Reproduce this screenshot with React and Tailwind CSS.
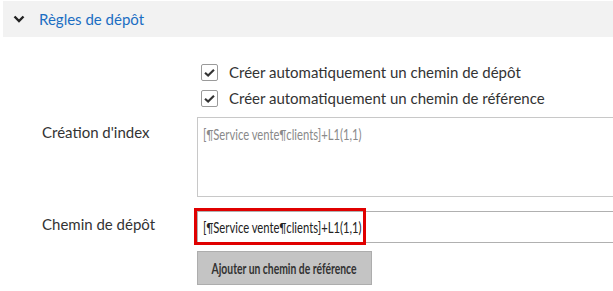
import { useState } from 'react';

function Check({ label }) {
  return (
    <label className="flex items-center gap-[11px] h-[26px]">
      <span className="w-[17px] h-[17px] border border-[#9a9a9a] rounded-[2px] bg-white flex items-center justify-center">
        <svg width="13" height="13" viewBox="0 0 16 16">
          <path d="M2.5 8.2 L6.3 11.8 L13.5 4.5" fill="none" stroke="#333" strokeWidth="2.6" />
        </svg>
      </span>
      <span className="text-[15px] text-[#333]">{label}</span>
    </label>
  );
}

function PathText() {
  return (
    <span className="inline-block origin-left scale-x-[0.75] text-[15px] whitespace-nowrap">
      [<span className="text-[13px]">¶</span>Service vente<span className="text-[13px]">¶</span>clients]+L1(1,1)
    </span>
  );
}

export default function App() {
  const [open] = useState(true);

  return (
    <div className="w-[613px] h-[291px] bg-white pt-px pl-[3px] overflow-hidden font-['Lato',sans-serif]">
      <div className="h-[36px] bg-[#f2f2f2] flex items-center pl-[10px] gap-[14px]">
        <svg width="12" height="8" viewBox="0 0 12 8">
          <path d="M1.5 1.5 L6 6 L10.5 1.5" fill="none" stroke="#222" strokeWidth="2.4" />
        </svg>
        <span className="text-[15px] text-[#1b6ec2]">Règles de dépôt</span>
      </div>

      {open && (
        <div className="pt-[22px]">
          <div className="pl-[198px] flex flex-col">
            <Check label="Créer automatiquement un chemin de dépôt" />
            <Check label="Créer automatiquement un chemin de référence" />
          </div>

          <div className="flex mt-[6px]">
            <div className="w-[194px] pl-[39px] pt-[4px] text-[15px] text-[#333]">Création d'index</div>
            <div className="flex-1 h-[80px] border border-r-0 border-[#c8c8c8] px-[5px] pt-[4px] text-[#8a8a8a]">
              <PathText />
            </div>
          </div>

          <div className="flex mt-[14px]">
            <div className="w-[194px] pl-[39px] pt-[2px] text-[15px] text-[#333]">Chemin de dépôt</div>
            <div className="flex-1 relative">
              <div className="h-[32px] border border-r-0 border-[#b0b0b0] px-[5px] flex items-center text-[#222]">
                <PathText />
              </div>
              <div className="absolute left-[-3px] top-[-3px] w-[172px] h-[37px] border-[3px] border-[#e00000]" />
            </div>
          </div>

          <div className="pl-[194px] mt-[8px]">
            <button className="h-[34px] w-[175px] bg-[#c4c4c4] border border-[#adadad] flex items-center justify-center overflow-hidden">
              <span className="inline-block scale-x-[0.69] text-[15px] font-bold whitespace-nowrap text-[#333]">
                Ajouter un chemin de référence
              </span>
            </button>
          </div>
        </div>
      )}
    </div>
  );
}
